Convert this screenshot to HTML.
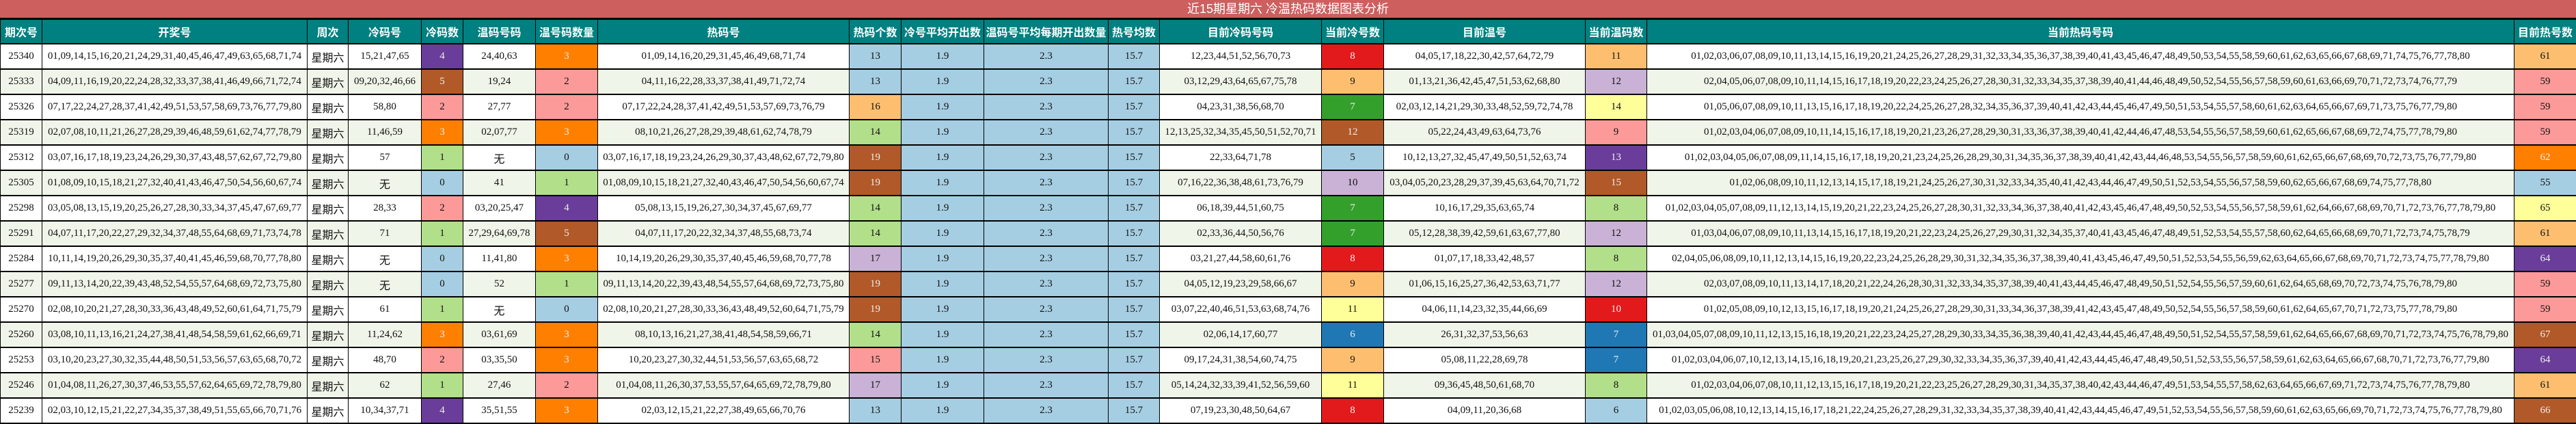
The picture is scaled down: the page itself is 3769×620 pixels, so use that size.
<!DOCTYPE html>
<html><head><meta charset="utf-8">
<style>
html,body{margin:0;padding:0;background:#fff;}
body{width:3769px;height:620px;overflow:hidden;}
.title{height:26px;background:#cd5f5f;color:#fff;text-align:center;font:18px/26px "Liberation Sans","Noto Sans CJK SC",sans-serif;border-bottom:2px solid #000;}
table{border-collapse:collapse;table-layout:fixed;width:3769px;}
td,th{border:1px solid #000;text-align:center;padding:0;white-space:nowrap;overflow:hidden;}
th{background:#008080;color:#fff;font:bold 16px "Noto Sans CJK SC",sans-serif;height:34px;border-bottom:2px solid #000;}
td{font:15px "Liberation Serif","Noto Sans CJK SC",serif;color:#111;height:35px;border-bottom:2px solid #000;}
tr:nth-child(even) td{background:#f0f5e9;}
tr:nth-child(odd) td{background:#fff;}
td.w{font-family:"Noto Sans CJK SC",sans-serif;font-size:16px;}
tr td.c0{background:#a6cee3}tr td.c1{background:#1f78b4;color:#eee}tr td.c2{background:#b2df8a}tr td.c3{background:#33a02c;color:#eee}
tr td.c4{background:#fb9a99}tr td.c5{background:#e31a1c;color:#eee}tr td.c6{background:#fdbf6f}tr td.c7{background:#ff7f00;color:#eee}
tr td.c8{background:#cab2d6}tr td.c9{background:#6a3d9a;color:#eee}tr td.c10{background:#ffff99}tr td.c11{background:#b15928;color:#eee}
</style></head><body>
<div class="title">近15期星期六 冷温热码数据图表分析</div>
<table>
<colgroup><col style="width:61px"><col style="width:388px"><col style="width:60px"><col style="width:107px"><col style="width:61px"><col style="width:106px"><col style="width:91px"><col style="width:368px"><col style="width:76px"><col style="width:121px"><col style="width:182px"><col style="width:75px"><col style="width:237px"><col style="width:91px"><col style="width:295px"><col style="width:90px"><col style="width:1269px"><col style="width:91px"></colgroup>
<thead><tr><th>期次号</th><th>开奖号</th><th>周次</th><th>冷码号</th><th>冷码数</th><th>温码号码</th><th>温号码数量</th><th>热码号</th><th>热码个数</th><th>冷号平均开出数</th><th>温码号平均每期开出数量</th><th>热号均数</th><th>目前冷码号码</th><th>当前冷号数</th><th>目前温号</th><th>当前温码数</th><th>当前热码号码</th><th>目前热号数</th></tr></thead>
<tbody>
<tr><td>25340</td><td>01,09,14,15,16,20,21,24,29,31,40,45,46,47,49,63,65,68,71,74</td><td class="w">星期六</td><td>15,21,47,65</td><td class="c9">4</td><td>24,40,63</td><td class="c7">3</td><td>01,09,14,16,20,29,31,45,46,49,68,71,74</td><td class="c0">13</td><td class="c0">1.9</td><td class="c0">2.3</td><td class="c0">15.7</td><td>12,23,44,51,52,56,70,73</td><td class="c5">8</td><td>04,05,17,18,22,30,42,57,64,72,79</td><td class="c6">11</td><td>01,02,03,06,07,08,09,10,11,13,14,15,16,19,20,21,24,25,26,27,28,29,31,32,33,34,35,36,37,38,39,40,41,43,45,46,47,48,49,50,53,54,55,58,59,60,61,62,63,65,66,67,68,69,71,74,75,76,77,78,80</td><td class="c6">61</td></tr>
<tr><td>25333</td><td>04,09,11,16,19,20,22,24,28,32,33,37,38,41,46,49,66,71,72,74</td><td class="w">星期六</td><td>09,20,32,46,66</td><td class="c11">5</td><td>19,24</td><td class="c4">2</td><td>04,11,16,22,28,33,37,38,41,49,71,72,74</td><td class="c0">13</td><td class="c0">1.9</td><td class="c0">2.3</td><td class="c0">15.7</td><td>03,12,29,43,64,65,67,75,78</td><td class="c6">9</td><td>01,13,21,36,42,45,47,51,53,62,68,80</td><td class="c8">12</td><td>02,04,05,06,07,08,09,10,11,14,15,16,17,18,19,20,22,23,24,25,26,27,28,30,31,32,33,34,35,37,38,39,40,41,44,46,48,49,50,52,54,55,56,57,58,59,60,61,63,66,69,70,71,72,73,74,76,77,79</td><td class="c4">59</td></tr>
<tr><td>25326</td><td>07,17,22,24,27,28,37,41,42,49,51,53,57,58,69,73,76,77,79,80</td><td class="w">星期六</td><td>58,80</td><td class="c4">2</td><td>27,77</td><td class="c4">2</td><td>07,17,22,24,28,37,41,42,49,51,53,57,69,73,76,79</td><td class="c6">16</td><td class="c0">1.9</td><td class="c0">2.3</td><td class="c0">15.7</td><td>04,23,31,38,56,68,70</td><td class="c3">7</td><td>02,03,12,14,21,29,30,33,48,52,59,72,74,78</td><td class="c10">14</td><td>01,05,06,07,08,09,10,11,13,15,16,17,18,19,20,22,24,25,26,27,28,32,34,35,36,37,39,40,41,42,43,44,45,46,47,49,50,51,53,54,55,57,58,60,61,62,63,64,65,66,67,69,71,73,75,76,77,79,80</td><td class="c4">59</td></tr>
<tr><td>25319</td><td>02,07,08,10,11,21,26,27,28,29,39,46,48,59,61,62,74,77,78,79</td><td class="w">星期六</td><td>11,46,59</td><td class="c7">3</td><td>02,07,77</td><td class="c7">3</td><td>08,10,21,26,27,28,29,39,48,61,62,74,78,79</td><td class="c2">14</td><td class="c0">1.9</td><td class="c0">2.3</td><td class="c0">15.7</td><td>12,13,25,32,34,35,45,50,51,52,70,71</td><td class="c11">12</td><td>05,22,24,43,49,63,64,73,76</td><td class="c4">9</td><td>01,02,03,04,06,07,08,09,10,11,14,15,16,17,18,19,20,21,23,26,27,28,29,30,31,33,36,37,38,39,40,41,42,44,46,47,48,53,54,55,56,57,58,59,60,61,62,65,66,67,68,69,72,74,75,77,78,79,80</td><td class="c4">59</td></tr>
<tr><td>25312</td><td>03,07,16,17,18,19,23,24,26,29,30,37,43,48,57,62,67,72,79,80</td><td class="w">星期六</td><td>57</td><td class="c2">1</td><td class="w">无</td><td class="c0">0</td><td>03,07,16,17,18,19,23,24,26,29,30,37,43,48,62,67,72,79,80</td><td class="c11">19</td><td class="c0">1.9</td><td class="c0">2.3</td><td class="c0">15.7</td><td>22,33,64,71,78</td><td class="c0">5</td><td>10,12,13,27,32,45,47,49,50,51,52,63,74</td><td class="c9">13</td><td>01,02,03,04,05,06,07,08,09,11,14,15,16,17,18,19,20,21,23,24,25,26,28,29,30,31,34,35,36,37,38,39,40,41,42,43,44,46,48,53,54,55,56,57,58,59,60,61,62,65,66,67,68,69,70,72,73,75,76,77,79,80</td><td class="c7">62</td></tr>
<tr><td>25305</td><td>01,08,09,10,15,18,21,27,32,40,41,43,46,47,50,54,56,60,67,74</td><td class="w">星期六</td><td class="w">无</td><td class="c0">0</td><td>41</td><td class="c2">1</td><td>01,08,09,10,15,18,21,27,32,40,43,46,47,50,54,56,60,67,74</td><td class="c11">19</td><td class="c0">1.9</td><td class="c0">2.3</td><td class="c0">15.7</td><td>07,16,22,36,38,48,61,73,76,79</td><td class="c8">10</td><td>03,04,05,20,23,28,29,37,39,45,63,64,70,71,72</td><td class="c11">15</td><td>01,02,06,08,09,10,11,12,13,14,15,17,18,19,21,24,25,26,27,30,31,32,33,34,35,40,41,42,43,44,46,47,49,50,51,52,53,54,55,56,57,58,59,60,62,65,66,67,68,69,74,75,77,78,80</td><td class="c0">55</td></tr>
<tr><td>25298</td><td>03,05,08,13,15,19,20,25,26,27,28,30,33,34,37,45,47,67,69,77</td><td class="w">星期六</td><td>28,33</td><td class="c4">2</td><td>03,20,25,47</td><td class="c9">4</td><td>05,08,13,15,19,26,27,30,34,37,45,67,69,77</td><td class="c2">14</td><td class="c0">1.9</td><td class="c0">2.3</td><td class="c0">15.7</td><td>06,18,39,44,51,60,75</td><td class="c3">7</td><td>10,16,17,29,35,63,65,74</td><td class="c2">8</td><td>01,02,03,04,05,07,08,09,11,12,13,14,15,19,20,21,22,23,24,25,26,27,28,30,31,32,33,34,36,37,38,40,41,42,43,45,46,47,48,49,50,52,53,54,55,56,57,58,59,61,62,64,66,67,68,69,70,71,72,73,76,77,78,79,80</td><td class="c10">65</td></tr>
<tr><td>25291</td><td>04,07,11,17,20,22,27,29,32,34,37,48,55,64,68,69,71,73,74,78</td><td class="w">星期六</td><td>71</td><td class="c2">1</td><td>27,29,64,69,78</td><td class="c11">5</td><td>04,07,11,17,20,22,32,34,37,48,55,68,73,74</td><td class="c2">14</td><td class="c0">1.9</td><td class="c0">2.3</td><td class="c0">15.7</td><td>02,33,36,44,50,56,76</td><td class="c3">7</td><td>05,12,28,38,39,42,59,61,63,67,77,80</td><td class="c8">12</td><td>01,03,04,06,07,08,09,10,11,13,14,15,16,17,18,19,20,21,22,23,24,25,26,27,29,30,31,32,34,35,37,40,41,43,45,46,47,48,49,51,52,53,54,55,57,58,60,62,64,65,66,68,69,70,71,72,73,74,75,78,79</td><td class="c6">61</td></tr>
<tr><td>25284</td><td>10,11,14,19,20,26,29,30,35,37,40,41,45,46,59,68,70,77,78,80</td><td class="w">星期六</td><td class="w">无</td><td class="c0">0</td><td>11,41,80</td><td class="c7">3</td><td>10,14,19,20,26,29,30,35,37,40,45,46,59,68,70,77,78</td><td class="c8">17</td><td class="c0">1.9</td><td class="c0">2.3</td><td class="c0">15.7</td><td>03,21,27,44,58,60,61,76</td><td class="c5">8</td><td>01,07,17,18,33,42,48,57</td><td class="c2">8</td><td>02,04,05,06,08,09,10,11,12,13,14,15,16,19,20,22,23,24,25,26,28,29,30,31,32,34,35,36,37,38,39,40,41,43,45,46,47,49,50,51,52,53,54,55,56,59,62,63,64,65,66,67,68,69,70,71,72,73,74,75,77,78,79,80</td><td class="c9">64</td></tr>
<tr><td>25277</td><td>09,11,13,14,20,22,39,43,48,52,54,55,57,64,68,69,72,73,75,80</td><td class="w">星期六</td><td class="w">无</td><td class="c0">0</td><td>52</td><td class="c2">1</td><td>09,11,13,14,20,22,39,43,48,54,55,57,64,68,69,72,73,75,80</td><td class="c11">19</td><td class="c0">1.9</td><td class="c0">2.3</td><td class="c0">15.7</td><td>04,05,12,19,23,29,58,66,67</td><td class="c6">9</td><td>01,06,15,16,25,27,36,42,53,63,71,77</td><td class="c8">12</td><td>02,03,07,08,09,10,11,13,14,17,18,20,21,22,24,26,28,30,31,32,33,34,35,37,38,39,40,41,43,44,45,46,47,48,49,50,51,52,54,55,56,57,59,60,61,62,64,65,68,69,70,72,73,74,75,76,78,79,80</td><td class="c4">59</td></tr>
<tr><td>25270</td><td>02,08,10,20,21,27,28,30,33,36,43,48,49,52,60,61,64,71,75,79</td><td class="w">星期六</td><td>61</td><td class="c2">1</td><td class="w">无</td><td class="c0">0</td><td>02,08,10,20,21,27,28,30,33,36,43,48,49,52,60,64,71,75,79</td><td class="c11">19</td><td class="c0">1.9</td><td class="c0">2.3</td><td class="c0">15.7</td><td>03,07,22,40,46,51,53,63,68,74,76</td><td class="c10">11</td><td>04,06,11,14,23,32,35,44,66,69</td><td class="c5">10</td><td>01,02,05,08,09,10,12,13,15,16,17,18,19,20,21,24,25,26,27,28,29,30,31,33,34,36,37,38,39,41,42,43,45,47,48,49,50,52,54,55,56,57,58,59,60,61,62,64,65,67,70,71,72,73,75,77,78,79,80</td><td class="c4">59</td></tr>
<tr><td>25260</td><td>03,08,10,11,13,16,21,24,27,38,41,48,54,58,59,61,62,66,69,71</td><td class="w">星期六</td><td>11,24,62</td><td class="c7">3</td><td>03,61,69</td><td class="c7">3</td><td>08,10,13,16,21,27,38,41,48,54,58,59,66,71</td><td class="c2">14</td><td class="c0">1.9</td><td class="c0">2.3</td><td class="c0">15.7</td><td>02,06,14,17,60,77</td><td class="c1">6</td><td>26,31,32,37,53,56,63</td><td class="c1">7</td><td>01,03,04,05,07,08,09,10,11,12,13,15,16,18,19,20,21,22,23,24,25,27,28,29,30,33,34,35,36,38,39,40,41,42,43,44,45,46,47,48,49,50,51,52,54,55,57,58,59,61,62,64,65,66,67,68,69,70,71,72,73,74,75,76,78,79,80</td><td class="c11">67</td></tr>
<tr><td>25253</td><td>03,10,20,23,27,30,32,35,44,48,50,51,53,56,57,63,65,68,70,72</td><td class="w">星期六</td><td>48,70</td><td class="c4">2</td><td>03,35,50</td><td class="c7">3</td><td>10,20,23,27,30,32,44,51,53,56,57,63,65,68,72</td><td class="c4">15</td><td class="c0">1.9</td><td class="c0">2.3</td><td class="c0">15.7</td><td>09,17,24,31,38,54,60,74,75</td><td class="c6">9</td><td>05,08,11,22,28,69,78</td><td class="c1">7</td><td>01,02,03,04,06,07,10,12,13,14,15,16,18,19,20,21,23,25,26,27,29,30,32,33,34,35,36,37,39,40,41,42,43,44,45,46,47,48,49,50,51,52,53,55,56,57,58,59,61,62,63,64,65,66,67,68,70,71,72,73,76,77,79,80</td><td class="c9">64</td></tr>
<tr><td>25246</td><td>01,04,08,11,26,27,30,37,46,53,55,57,62,64,65,69,72,78,79,80</td><td class="w">星期六</td><td>62</td><td class="c2">1</td><td>27,46</td><td class="c4">2</td><td>01,04,08,11,26,30,37,53,55,57,64,65,69,72,78,79,80</td><td class="c8">17</td><td class="c0">1.9</td><td class="c0">2.3</td><td class="c0">15.7</td><td>05,14,24,32,33,39,41,52,56,59,60</td><td class="c10">11</td><td>09,36,45,48,50,61,68,70</td><td class="c2">8</td><td>01,02,03,04,06,07,08,10,11,12,13,15,16,17,18,19,20,21,22,23,25,26,27,28,29,30,31,34,35,37,38,40,42,43,44,46,47,49,51,53,54,55,57,58,62,63,64,65,66,67,69,71,72,73,74,75,76,77,78,79,80</td><td class="c6">61</td></tr>
<tr><td>25239</td><td>02,03,10,12,15,21,22,27,34,35,37,38,49,51,55,65,66,70,71,76</td><td class="w">星期六</td><td>10,34,37,71</td><td class="c9">4</td><td>35,51,55</td><td class="c7">3</td><td>02,03,12,15,21,22,27,38,49,65,66,70,76</td><td class="c0">13</td><td class="c0">1.9</td><td class="c0">2.3</td><td class="c0">15.7</td><td>07,19,23,30,48,50,64,67</td><td class="c5">8</td><td>04,09,11,20,36,68</td><td class="c0">6</td><td>01,02,03,05,06,08,10,12,13,14,15,16,17,18,21,22,24,25,26,27,28,29,31,32,33,34,35,37,38,39,40,41,42,43,44,45,46,47,49,51,52,53,54,55,56,57,58,59,60,61,62,63,65,66,69,70,71,72,73,74,75,76,77,78,79,80</td><td class="c11">66</td></tr>
</tbody></table>
</body></html>
